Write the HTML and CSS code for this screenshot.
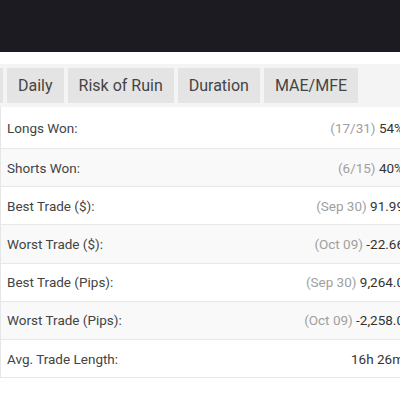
FILE: index.html
```html
<!DOCTYPE html>
<html>
<head>
<meta charset="utf-8">
<link rel="stylesheet" href="styles.css">
</head>
<body>
<div class="page">
  <div class="topbar"></div>
  <div class="gap"></div>
  <div class="tabs">
    <div class="tab tab-hidden">Hourly</div>
    <div class="tab">Daily</div>
    <div class="tab">Risk of Ruin</div>
    <div class="tab">Duration</div>
    <div class="tab">MAE/MFE</div>
  </div>
  <div class="table">
    <div class="row first"><span class="label">Longs Won:</span><span class="value"><span class="muted">(17/31)</span> 54%</span></div>
    <div class="row alt"><span class="label">Shorts Won:</span><span class="value"><span class="muted">(6/15)</span> 40%</span></div>
    <div class="row"><span class="label">Best Trade ($):</span><span class="value"><span class="muted">(Sep 30)</span> 91.99</span></div>
    <div class="row alt"><span class="label">Worst Trade ($):</span><span class="value"><span class="muted">(Oct 09)</span> -22.66</span></div>
    <div class="row"><span class="label">Best Trade (Pips):</span><span class="value"><span class="muted">(Sep 30)</span> 9,264.0</span></div>
    <div class="row alt"><span class="label">Worst Trade (Pips):</span><span class="value"><span class="muted">(Oct 09)</span> -2,258.0</span></div>
    <div class="row"><span class="label">Avg. Trade Length:</span><span class="value">16h 26m</span></div>
  </div>
</div>
</body>
</html>
```

FILE: styles.css
```css
html, body {
  margin: 0;
  padding: 0;
  background: #ffffff;
  overflow: hidden;
}
.page {
  width: 400px;
  height: 400px;
  overflow: hidden;
  font-family: Roboto, "Liberation Sans", sans-serif;
}
.topbar {
  height: 52px;
  background: #1c1b22;
}
.gap {
  height: 12px;
  background: #ffffff;
}
.tabs {
  display: flex;
  gap: 4px;
  background: #f4f4f4;
  padding: 4px 0 4px 0;
  white-space: nowrap;
}
.tab {
  flex: none;
  height: 35px;
  line-height: 35px;
  padding: 0 11px;
  background: #e4e4e4;
  color: #444444;
  font-size: 16px;
}
.tab-hidden {
  width: 50px;
  margin-left: -69px;
  color: transparent;
}
.table {
  width: 410px;
  border-left: 1px solid #e6e6e6;
  box-sizing: border-box;
}
.row {
  display: flex;
  justify-content: space-between;
  align-items: center;
  height: 37.2px;
  padding: 0 6px;
  border-bottom: 1px solid #e8e8e8;
  font-size: 13.5px;
  color: #444444;
  white-space: nowrap;
}
.row.first {
  height: 41px;
}
.row.alt {
  background: #f9f9f9;
}
.label {
  color: #444444;
}
.value {
  color: #333333;
}
.muted {
  color: #a0a0a0;
}
```
